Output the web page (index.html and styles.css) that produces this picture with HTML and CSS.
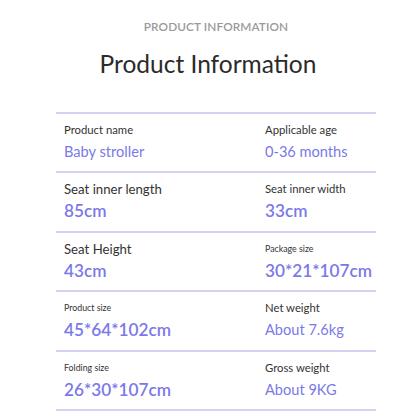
FILE: index.html
```html
<!DOCTYPE html>
<html lang="en">
<head>
<meta charset="utf-8">
<title>Product Information</title>
<link rel="stylesheet" href="styles.css">
</head>
<body>
<header class="head">
  <div class="kicker">PRODUCT INFORMATION</div>
  <h1 class="title">Product Information</h1>
</header>
<section class="table">
  <div class="row">
    <div class="cell"><div class="label l-m">Product name</div><div class="value v-m">Baby stroller</div></div>
    <div class="cell"><div class="label l-m">Applicable age</div><div class="value v-m">0-36 months</div></div>
  </div>
  <div class="row">
    <div class="cell"><div class="label l-l">Seat inner length</div><div class="value v-l">85cm</div></div>
    <div class="cell"><div class="label l-m">Seat inner width</div><div class="value v-l">33cm</div></div>
  </div>
  <div class="row">
    <div class="cell"><div class="label l-l">Seat Height</div><div class="value v-l">43cm</div></div>
    <div class="cell"><div class="label l-s">Package size</div><div class="value v-l">30*21*107cm</div></div>
  </div>
  <div class="row">
    <div class="cell"><div class="label l-s">Product size</div><div class="value v-l">45*64*102cm</div></div>
    <div class="cell"><div class="label l-m">Net weight</div><div class="value v-m">About 7.6kg</div></div>
  </div>
  <div class="row">
    <div class="cell"><div class="label l-s">Folding size</div><div class="value v-l">26*30*107cm</div></div>
    <div class="cell"><div class="label l-m">Gross weight</div><div class="value v-m">About 9KG</div></div>
  </div>
</section>
</body>
</html>
```
FILE: styles.css
```css
html, body {
  margin: 0;
  padding: 0;
  background: #ffffff;
}
body {
  width: 416px;
  height: 416px;
  overflow: hidden;
  font-family: Lato, "Noto Sans", sans-serif;
}
.head {
  text-align: center;
}
.kicker {
  padding-top: 19px;
  padding-left: 16px;
  font-size: 11.8px;
  line-height: 16px;
  font-weight: 600;
  color: #9a9a9a;
  letter-spacing: 0.1px;
}
.title {
  margin: 14px 0 0 0;
  font-size: 24.5px;
  line-height: 30px;
  font-weight: 400;
  color: #2b2b2b;
}
.table {
  margin: 33px 0 0 56px;
  width: 320px;
  border-top: 2px solid #d3d3f0;
}
.row {
  display: grid;
  grid-template-columns: 201px 119px;
  height: 57.4px;
  border-bottom: 2px solid #d3d3f0;
}
.cell {
  padding: 8px 0 0 8px;
  display: flex;
  flex-direction: column;
  gap: 2px;
  white-space: nowrap;
}
.label {
  line-height: 16px;
  color: #333333;
}
.l-s { font-size: 8.8px; }
.l-m { font-size: 11.3px; }
.l-l { font-size: 13.2px; }
.value {
  line-height: 24px;
  color: #7b79e8;
}
.v-m { font-size: 14.6px; }
.v-l { font-size: 17.2px; font-weight: 600; }
```
